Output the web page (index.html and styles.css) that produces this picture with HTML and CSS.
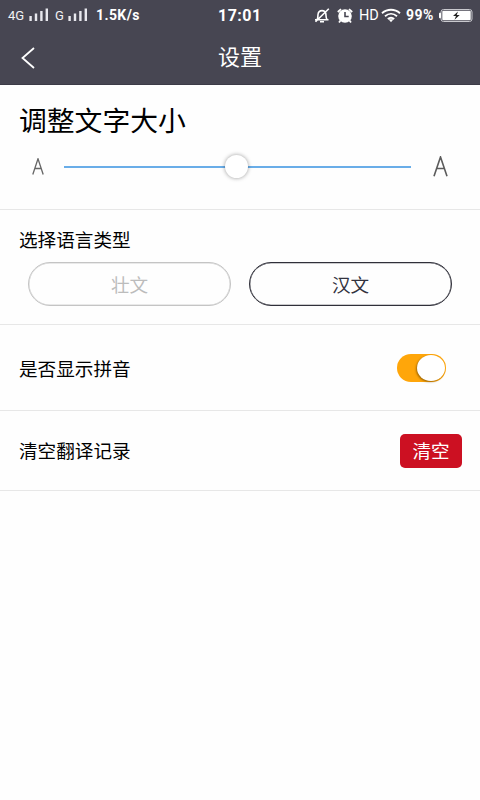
FILE: index.html
```html
<!DOCTYPE html>
<html lang="zh-CN">
<head>
<meta charset="utf-8">
<title>设置</title>
<link rel="stylesheet" href="styles.css">
</head>
<body>
<header class="top">
  <div class="status">
    <div class="status-left">
      <span class="net net-4g">4G</span>
      <svg class="bars" width="20" height="14" viewBox="0 0 20 14"><path d="M1.6 8v5M7 5.5V13M12.4 3v10M17.8 .5V13" stroke="#e8e8ee" stroke-width="2.4"/></svg>
      <span class="net net-g">G</span>
      <svg class="bars" width="20" height="14" viewBox="0 0 20 14"><path d="M1.6 8v5M7 5.5V13M12.4 3v10M17.8 .5V13" stroke="#e8e8ee" stroke-width="2.4"/></svg>
      <span class="speed">1.5K/s</span>
    </div>
    <span class="clock">17:01</span>
    <div class="status-right">
      <svg class="bell" width="16" height="16" viewBox="0 0 16 16" fill="none" stroke="#fff" stroke-width="1.6"><path d="M1 11.8h13.5M3.2 11.5C4 10 3.8 8.5 4 6.5 4.3 4 6 2.6 8 2.6s3.4 1 3.8 3c.4 2.4 0 4.4 1.2 6M14.8.8 1.5 13.8M6 13.8h4"/></svg>
      <svg class="alarm" width="16" height="16" viewBox="0 0 16 16"><circle cx="8" cy="8" r="6.8" fill="#fff"/><path d="M.8 4 4 1.1M15.2 4 12 1.1M3.5 12.5 2 14.5M12.5 12.5l1.5 2" stroke="#fff" stroke-width="1.8"/><path d="M8 4v4.5h3.7" fill="none" stroke="#474652" stroke-width="1.6"/></svg>
      <span class="hd">HD</span>
      <svg class="wifi" width="20" height="15" viewBox="0 0 20 15" fill="none" stroke="#fff" stroke-width="1.9"><path d="M1 5.2c5.3-4.7 12.7-4.7 18 0M4 8.2c3.6-3.1 8.4-3.1 12 0M6.8 11c2-1.6 4.4-1.6 6.4 0"/><path d="m7.5 11.2 2.5 3 2.5-3z" fill="#fff" stroke="none"/></svg>
      <span class="percent">99%</span>
      <svg class="battery" width="34" height="15" viewBox="0 0 34 15"><rect x="2" y="1.5" width="31" height="12" rx="2.5" fill="none" stroke="#c9c9ce"/><path d="M1.5 5.2h-1v4.6h1z" fill="#fff" stroke="#fff"/><rect x="3.3" y="2.8" width="28.4" height="9.4" rx="1" fill="#fff"/><path d="m19 3.5-5 4.6h3l-1.5 3.6 5.2-4.8h-3z" fill="#222"/></svg>
    </div>
  </div>
  <div class="nav">
    <svg class="back" width="14" height="22" viewBox="0 0 14 22"><path d="M13 1 1.5 11 13 21" fill="none" stroke="#fff" stroke-width="1.8"/></svg>
    <h1 class="title">设置</h1>
  </div>
</header>
<main>
  <section class="section size">
    <h2 class="size-title">调整文字大小</h2>
    <div class="slider">
      <svg class="small-a" width="12" height="18" viewBox="0 0 12 18"><path d="M.8 16.5 6 .8l5.2 15.7M2.7 10.5h6.6" fill="none" stroke="#666" stroke-width="1.3"/></svg>
      <div class="track"><span class="knob"></span></div>
      <svg class="large-a" width="15" height="22" viewBox="0 0 15 22"><path d="M1 20.3 7.5 1 14 20.3M3.5 12.5h8" fill="none" stroke="#5c5c5c" stroke-width="1.6"/></svg>
    </div>
  </section>
  <section class="section language">
    <h2 class="label">选择语言类型</h2>
    <div class="choices">
      <button class="choice">壮文</button>
      <button class="choice selected">汉文</button>
    </div>
  </section>
  <section class="section row pinyin">
    <span class="label">是否显示拼音</span>
    <span class="switch"><span class="switch-knob"></span></span>
  </section>
  <section class="section row history">
    <span class="label">清空翻译记录</span>
    <button class="clear">清空</button>
  </section>
</main>
</body>
</html>
```
FILE: styles.css
```css
* { box-sizing: border-box; }
body {
  margin: 0;
  min-height: 800px;
  background: #fefefe;
  color: #000;
  font-family: "Noto Sans CJK SC", sans-serif;
}
h1, h2 { margin: 0; font-weight: 400; }
button { padding: 0; font-family: inherit; background: transparent; }
svg { display: block; flex: none; }
.top { height: 85px; background: #474652; color: #fff; border-bottom: 1px solid #3c3b47; }
.status {
  display: grid;
  grid-template-columns: 218px 44px 1fr;
  align-items: center;
  height: 31px;
  font-family: Roboto, sans-serif;
  line-height: 31px;
  white-space: nowrap;
}
.status-left, .status-right { display: flex; align-items: center; height: 31px; }
.status-left { padding-left: 8px; }
.status-right { padding-left: 52px; }
.bars { margin-top: -1px; }
.net { font-size: 13px; color: #f2f2f5; }
.net-4g { width: 21px; }
.net-g { width: 13px; margin-left: 6px; }
.speed { margin-left: 8px; font-size: 14px; font-weight: 700; letter-spacing: .4px; }
.clock { font-size: 16px; font-weight: 700; letter-spacing: .5px; }
.alarm { margin-left: 7px; }
.hd { width: 20px; margin-left: 6px; font-size: 14.5px; }
.wifi { margin-left: 2px; }
.percent { width: 33px; margin-left: 5px; font-size: 14px; font-weight: 700; letter-spacing: .5px; }
.nav { display: flex; align-items: center; height: 53px; }
.back { margin-left: 21px; }
.title { margin-left: 183px; font-size: 22px; line-height: 49px; padding-bottom: 4px; }
.section { border-bottom: 1px solid #e7e7e7; }
.size { height: 125px; padding-top: 14px; }
.size-title { padding-left: 19px; font-size: 27.8px; line-height: 40px; padding-bottom: 3px; }
.slider { display: flex; align-items: center; height: 49px; padding-left: 32px; }
.track { position: relative; width: 347px; height: 2px; margin: 0 22px 0 20px; background: #69ade8; }
.knob {
  position: absolute;
  top: -11px;
  left: 161px;
  width: 23px;
  height: 23px;
  border-radius: 50%;
  background: #fff;
  box-shadow: 0 0 4px rgba(0, 0, 0, .4);
}
.label { font-size: 18.6px; line-height: 26px; }
.language { height: 115px; padding: 16px 28px 0 19px; }
.language .label { padding-bottom: 2px; }
.choices { display: flex; gap: 18px; margin: 8px 0 0 9px; }
.choice {
  width: 203px;
  height: 44px;
  padding-bottom: 1px;
  border: 1px solid #c4c4c4;
  border-radius: 22px;
  box-shadow: inset 0 0 0 .5px #d4d4d4;
  color: #bcbcbc;
  font-size: 18.6px;
}
.selected { border-color: #30303a; box-shadow: inset 0 0 0 .3px #30303a; color: #33333f; }
.row { display: flex; align-items: center; justify-content: space-between; padding-left: 19px; }
.pinyin { height: 86px; padding-right: 34px; }
.switch { display: flex; justify-content: flex-end; width: 49px; height: 28px; padding: 1px; border-radius: 14px; background: #ffa60a; }
.switch-knob { width: 28px; height: 26px; border-radius: 50%; background: #fff; box-shadow: -1px 1px 2px rgba(100, 65, 0, .6); }
.history { height: 80px; padding-right: 18px; }
.history .label { padding-bottom: 1px; }
.clear { width: 62px; height: 34px; padding-bottom: 2px; border: 0; border-radius: 5px; background: #cc1022; color: #fff; font-size: 18.6px; }
```
